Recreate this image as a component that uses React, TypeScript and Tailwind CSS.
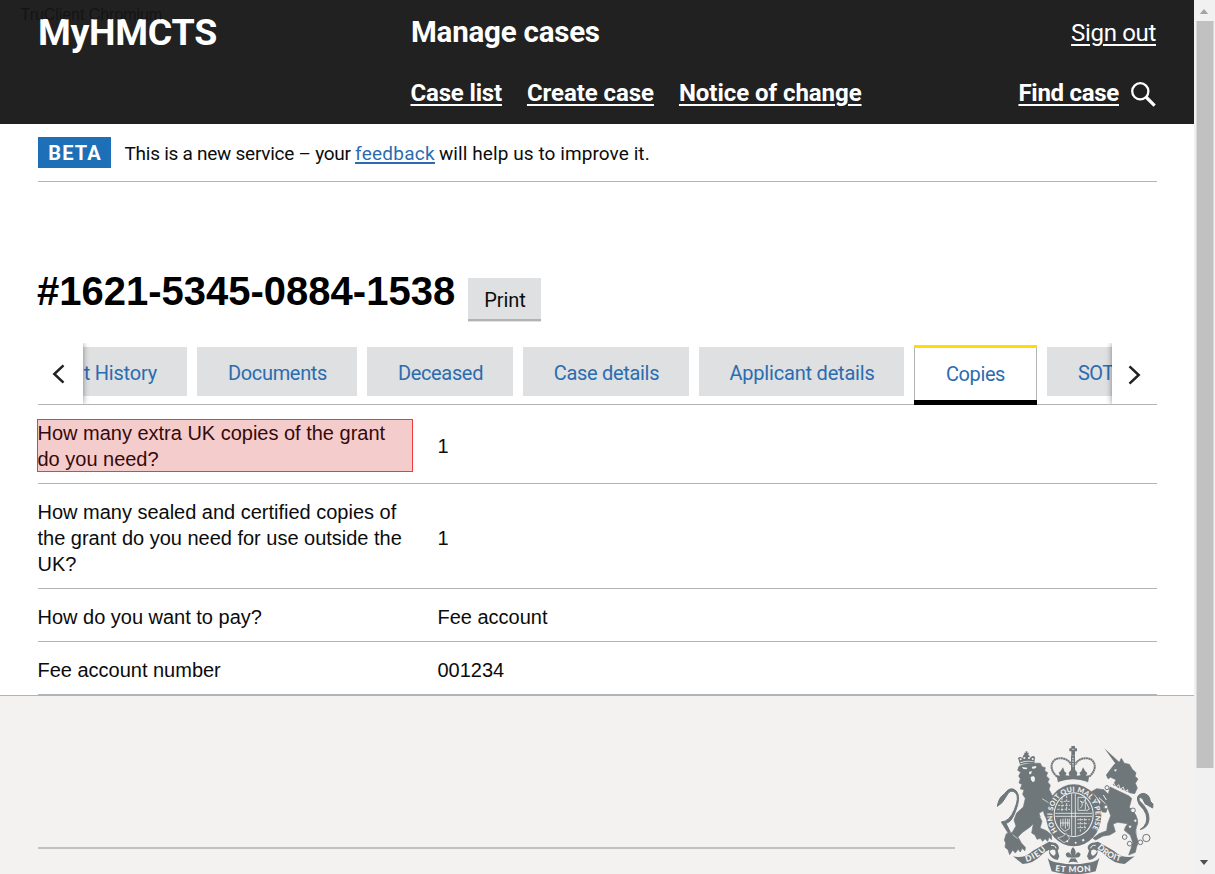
import type { ReactNode } from 'react';

const tabs = [
  { label: 'Documents', box: 'w-[160px]', track: 'tracking-[-0.32px]' },
  { label: 'Deceased', box: 'w-[146px]', track: 'tracking-[-0.34px]' },
  { label: 'Case details', box: 'w-[166px]', track: 'tracking-[-0.32px]' },
  { label: 'Applicant details', box: 'w-[205px]', track: 'tracking-[-0.2px]' },
];

function HeaderLink({ children, className }: { children: ReactNode; className: string }) {
  return (
    <a href="#" className={`block whitespace-nowrap text-[24px] leading-[30px] text-white underline decoration-2 underline-offset-[3px] ${className}`}>
      {children}
    </a>
  );
}

function Row({ question, answer, className, marked }: { question: string; answer: string; className: string; marked?: boolean }) {
  return (
    <div className={`flex items-center border-b border-[#b1b4b6] ${className}`}>
      <div className="relative -ml-[0.5px] w-[375px] shrink-0">
        {question}
        {marked && <div className="absolute -left-[0.5px] top-[-1px] h-[53px] w-[376px] border border-[#f33a3a] bg-[#cc0000]/20" />}
      </div>
      <div className="ml-[25px]">{answer}</div>
    </div>
  );
}

function Crest() {
  return (
    <svg viewBox="45 192 480 390" className="h-[130px] w-[160px] shrink-0" fill="#6f777b" stroke="none">
      {/* lion crown */}
      <path d="M120 254 L114 234 Q120 228 127 234 L130 226 Q138 214 147 226 L151 233 Q158 224 165 231 L163 252 Q141 245 120 254Z" />
      <path d="M137 214h5v12h-5z M133 218h13v4h-13z" />
      <g fill="#f3f2f1"><circle cx="122" cy="238" r="3" /><circle cx="133" cy="234" r="3.2" /><circle cx="147" cy="234" r="3.2" /><circle cx="158" cy="237" r="3" /><path d="M121 247 Q141 238 162 245 L162 247 Q141 241 121 250Z" /></g>
      {/* lion */}
      <path stroke="#6f777b" strokeWidth="2" d="M117 259 Q140 247 181 250 L186 260 L196 263 L194 272 L203 278 L199 288 L208 297 L203 306 L211 316 L207 328 L216 346 L225 352 L216 366 L224 380 L221 404 L213 394 L211 411 L203 402 L200 418 L193 404 L190 392 L177 400 L186 424 L180 444 L199 452 L214 464 L215 479 L207 472 L203 484 L195 476 L188 484 L181 475 L171 478 L165 465 L155 459 L160 431 L150 441 L126 458 L114 471 L124 489 L136 502 L135 512 L126 505 L121 516 L114 508 L106 519 L98 510 L89 524 L84 509 L75 502 L77 489 L73 480 L79 461 L96 458 L108 438 L102 420 L110 399 L130 381 L136 355 L128 343 L132 329 L121 327 L126 313 L117 309 L121 296 L116 288 L122 277 L113 271Z" />
      <path d="M126 261l16 2-2 5-10-1z M155 260l14-2-1 6-10 3z M147 275l9-1-3 8-5 1z M152 291l8-3 5 5-1 10-5 4-6-7z" fill="#f3f2f1" />
      <path d="M186 356l20 12 8 13M180 410l9 14M98 464l15 12" fill="none" stroke="#f3f2f1" strokeWidth="2" />
      <path stroke="#6f777b" strokeWidth="3" d="M86 461 Q79 450 64 426 Q89 424 103 389 Q119 351 107 339 Q91 323 77 352 Q68 370 52 379 Q56 352 73 342 Q91 316 109 333 Q124 351 106 395 Q94 428 78 430 L91 457Z" />
      {/* unicorn */}
      <path d="M373 205 L421 249 L410 256Z" />
      <path stroke="#6f777b" strokeWidth="2" d="M379 285 L390 270 L404 252 L418 247 L424 235 L433 250 L448 253 L457 268 L468 278 L465 289 L474 297 L466 310 L472 324 L464 341 L449 338 L400 315 L408 299 L392 292 L384 296Z" />
      <path d="M401 270l9-3-2 8z" fill="#f3f2f1" />
      <path stroke="#6f777b" strokeWidth="2" d="M390 321 L446 347 L455 355 L448 382 Q474 404 473 430 Q464 450 469 468 L475 486 L469 503 L466 517 L446 525 L453 506 L458 487 L451 466 L433 451 Q433 444 443 431 L413 427 L399 432 L406 455 L389 465 L369 468 L347 480 L339 475 L357 461 L380 452 L383 431 L392 407 L383 382 L378 397 L367 396 L357 377 L363 366 L345 344 L334 335 L350 326 L372 329 L385 343Z" />
      <path d="M393 317 L448 345 M400 307l8 15 8-8 5 14 9-7 4 14 9-6 1 14" fill="none" stroke="#f3f2f1" strokeWidth="2.6" />
      <path d="M357 353l19 18m-6-26 9 15m-1 14-6 10" fill="none" stroke="#f3f2f1" strokeWidth="3" />
      <path stroke="#6f777b" strokeWidth="3" d="M480 449 Q507 433 498 402 Q493 388 478 374 Q462 345 489 340 Q509 342 511 364 L519 372 L518 384 L495 371 L488 356 Q474 347 478 362 Q508 390 507 417 Q505 444 480 449Z" />
      {/* chain */}
      <g fill="#f3f2f1" stroke="#6f777b" strokeWidth="3"><circle cx="434" cy="471" r="7" /><circle cx="449" cy="491" r="7" /><circle cx="481" cy="487" r="7" /><circle cx="499" cy="474" r="11" /><circle cx="459" cy="391" r="7" /><circle cx="466" cy="422" r="5" /><circle cx="450" cy="440" r="5" /><circle cx="381" cy="323" r="6" /><circle cx="378" cy="381" r="6" /></g>
      {/* royal crown */}
      <path d="M274 198h11v7h6v9h-6v12h-11v-12h-6v-9h6z" />
      <path d="M276 208h7" stroke="#f3f2f1" strokeWidth="2" />
      <path d="M231 290 C200 262 218 231 245 235 Q267 238 273 254 M328 290 C359 262 341 231 314 235 Q292 238 286 254" fill="none" stroke="#6f777b" strokeWidth="6" strokeDasharray="6 1" />
      <path d="M273 226h12v52h-12z" />
      <path d="M279 233v38" stroke="#f3f2f1" strokeWidth="3" strokeDasharray="5 3" />
      <path d="M230 286 L240 287 L236 278 L242 273 L249 262 L254 275 L260 279 L256 286 L268 287 L266 278 L273 270 L279 259 L286 270 L292 278 L290 287 L302 286 L298 279 L304 274 L309 262 L316 274 L322 279 L318 287 L328 286 L324 308 Q279 293 234 308Z" />
      <path d="M235 308 Q279 292 323 308" fill="none" stroke="#f3f2f1" strokeWidth="5" />
      {/* garter and shield */}
      <ellipse cx="281" cy="406" rx="83" ry="93" />
      <ellipse cx="281" cy="404" rx="60" ry="67" fill="#f3f2f1" />
      <ellipse cx="281" cy="404" rx="57" ry="64" />
      <g fill="none" stroke="#f3f2f1" strokeWidth="2.4">
        <path d="M275 341v126M286 341v126M226 400h110M226 409h110" />
        <path d="M240 364h30M234 376h36M232 388h38M246 353v40M260 347v46" strokeDasharray="7 4" />
        <path d="M292 419h38M292 431h34M292 443h26M301 415v42M314 415v35" strokeDasharray="7 4" />
        <path d="M294 352h22v39h-22zM300 385q12-9 3-22m-3 0 10 5 6-10m2 8 10 21-10 6" />
        <path d="M242 418v24l12 12 14-8v-30M249 416v23m7-24v31m7-30v23M240 429h28" />
      </g>
      <path id="garter" d="M241 463 A65 72 0 1 1 327 459" fill="none" />
      <text fill="#f3f2f1" fontFamily="Lato, sans-serif" fontWeight="900" fontSize="21">
        <textPath href="#garter" startOffset="12" textLength="306" lengthAdjust="spacing">HONI SOIT QUI MAL Y PENSE</textPath>
      </text>
      <path d="M233 474q18-3 26-14l10 16q-10 10-17 12z" stroke="#f3f2f1" strokeWidth="2" />
      <g fill="#f3f2f1"><circle cx="262" cy="484" r="3" /><circle cx="287" cy="488" r="3" /><path d="m305 480 5-4 4 5-5 4z" /></g>
      {/* motto scroll */}
      <path d="M99 529 Q130 538 159 512 L207 485 L227 489 Q243 499 233 512 L238 529 L233 540 Q213 537 207 519 L208 509 Q198 512 187 523 Q160 552 128 552Z" />
      <path d="M464 529 Q430 538 401 512 L354 485 L334 489 Q316 499 327 512 L321 529 L327 540 Q347 537 353 519 L352 509 Q362 512 373 523 Q401 552 434 552Z" />
      <path d="M209 514q6-8 16-4 5 12-3 17 -9-1-13-13zM351 514q-6-8-16-4-5 12 3 17 9-1 13-13z" fill="#f3f2f1" />
      <path d="M213 496q14-1 15 9M347 496q-14-1-15 9" fill="none" stroke="#f3f2f1" strokeWidth="3" />
      <path d="M203 534 Q214 547 237 548 Q280 557 323 548 Q346 547 358 534 L347 574 Q280 592 215 574Z" />
      <path d="M279 501 Q293 514 282 530 Q294 507 302 523 Q298 536 286 533 L294 548 Q279 542 265 548 L273 533 Q260 536 257 523 Q265 507 277 530 Q266 514 279 501Z" />
      <path d="M263 534h32" stroke="#f3f2f1" strokeWidth="2" />
      <path id="dieu" d="M139 545 Q169 540 204 505" fill="none" />
      <path id="droit" d="M351 503 Q385 540 429 546" fill="none" />
      <path id="mon" d="M225 573 Q280 581 336 573" fill="none" />
      <g fill="#f3f2f1" fontFamily="Lato, sans-serif" fontWeight="900" fontSize="25">
        <text><textPath href="#dieu" textLength="70">DIEU</textPath></text>
        <text><textPath href="#droit" textLength="82">DROIT</textPath></text>
        <text><textPath href="#mon" textLength="108">ET MON</textPath></text>
      </g>
    </svg>
  );
}

export default function App() {
  return (
    <div className="flex h-[874px] w-[1215px] overflow-hidden bg-white font-['Roboto',sans-serif] text-[#0b0c0c]">
      <div className="relative flex w-[1194px] flex-col overflow-hidden">
        <header className="h-[124px] shrink-0 bg-[#212121] pl-[38px] pr-[38px] text-white">
          <div className="flex h-[64px] items-center">
            <div className="w-[373px] whitespace-nowrap text-[37.5px] font-bold leading-[44px] tracking-[-0.3px]">MyHMCTS</div>
            <div className="flex-1 text-[29.5px] font-bold leading-[36px] tracking-[-0.22px]">Manage cases</div>
            <HeaderLink className="pt-px tracking-[-0.33px]">Sign out</HeaderLink>
          </div>
          <nav className="flex h-[60px] items-start pl-[372.5px] pt-[14px] font-bold">
            <HeaderLink className="mr-[25px] tracking-[-0.17px]">Case list</HeaderLink>
            <HeaderLink className="mr-[25px] tracking-[-0.07px]">Create case</HeaderLink>
            <HeaderLink className="tracking-[-0.05px]">Notice of change</HeaderLink>
            <HeaderLink className="ml-auto mr-[12px] tracking-[-0.28px]">Find case</HeaderLink>
            <svg viewBox="0 0 25 25" className="mt-[4px] h-[25px] w-[25px]" fill="none" stroke="#fff">
              <circle cx="9.3" cy="9.3" r="8.1" strokeWidth="2.3" />
              <path d="m15 15 8.6 8.6" strokeWidth="3.2" />
            </svg>
          </nav>
        </header>

        <div className="mx-[38px] mr-[37px] flex h-[58px] shrink-0 items-start border-b border-[#b1b4b6] pt-[13px]">
          <strong className="mr-[13.5px] flex h-[31px] w-[73px] items-center justify-center bg-[#1d70b8] pl-px pt-px text-[20px] leading-none tracking-[1.1px] text-white">BETA</strong>
          <p className="flex whitespace-nowrap pt-[4px] text-[19px] leading-[25px]">
            <span className="w-[230.5px] tracking-[-0.26px]">This is a new service – your</span>
            <a href="#" className="w-[84px] tracking-[0.27px] text-[#2b6cb0] underline decoration-[1.5px] underline-offset-[2px]">feedback</a>
            <span className="tracking-[0.08px]">will help us to improve it.</span>
          </p>
        </div>

        <div className="flex h-[161px] shrink-0 items-start pl-[37px] pt-[96px]">
          <h1 className="w-[431px] font-['Liberation_Sans',sans-serif] text-[40px] font-bold leading-[27px] text-black">#1621-5345-0884-1538</h1>
          <button className="h-[44px] w-[73px] border-b border-[#dee0e2] bg-[#dee0e2] pl-px pt-px text-[20px] leading-[24px] tracking-[-0.1px] shadow-[inset_0_-2px_0_#b1b4b6]">Print</button>
        </div>

        <div className="ml-[38px] mr-[37px] flex h-[62px] shrink-0 border-b border-[#b1b4b6] text-[20px] text-[#2b6cb0]">
          <div className="relative z-10 flex h-[61px] w-[45px] shrink-0 items-center bg-white pl-[14px] pt-px shadow-[0_0_6px_rgba(0,0,0,0.45)] [clip-path:inset(0_-8px_0_0)]">
            <svg viewBox="0 0 13 20" className="h-[20px] w-[13px]" fill="none" stroke="#212121" strokeWidth="2.5"><path d="M11.5 1.3 2.3 10l9.2 8.7" /></svg>
          </div>
          <div className="flex h-[62px] w-[1029px] shrink-0 gap-[10px] overflow-hidden whitespace-nowrap pt-[2px]">
            <div className="mt-[2px] flex h-[49px] w-[104px] shrink-0 items-center justify-end bg-[#dee0e2] pr-[30px] pt-[2px] tracking-[-0.2px]">Event History</div>
            {tabs.map((t) => (
              <div key={t.label} className={`mt-[2px] flex h-[49px] shrink-0 items-center justify-center bg-[#dee0e2] pl-px pt-[2px] ${t.box} ${t.track}`}>{t.label}</div>
            ))}
            <div className="flex h-[60px] w-[123px] shrink-0 flex-col border-x border-[#b1b4b6] bg-white">
              <div className="-mx-px h-[3px] bg-[#ffdd00]" />
              <div className="flex flex-1 items-center justify-center tracking-[-0.4px]">Copies</div>
              <div className="-mx-px h-[5px] bg-black" />
            </div>
            <div className="mt-[2px] flex h-[49px] w-[104px] shrink-0 items-center bg-[#dee0e2] pl-[31px] pt-[2px] tracking-[-0.6px]">SOT</div>
          </div>
          <div className="relative z-10 flex h-[61px] w-[45px] shrink-0 items-center bg-white pl-[16px] pt-[2px] shadow-[0_0_6px_rgba(0,0,0,0.45)] [clip-path:inset(0_0_0_-8px)]">
            <svg viewBox="0 0 13 20" className="h-[20px] w-[13px]" fill="none" stroke="#212121" strokeWidth="2.5"><path d="m1.5 1.3 9.2 8.7-9.2 8.7" /></svg>
          </div>
        </div>

        <div className="ml-[38px] mr-[37px] flex h-[290px] shrink-0 flex-col font-['Liberation_Sans',sans-serif] text-[20px] leading-[26px] tracking-[-0.01px]">
          <Row className="h-[79px] pt-[4px]" question="How many extra UK copies of the grant do you need?" answer="1" marked />
          <Row className="h-[105px] pt-[4px]" question="How many sealed and certified copies of the grant do you need for use outside the UK?" answer="1" />
          <Row className="h-[53px] pt-[4px]" question="How do you want to pay?" answer="Fee account" />
          <Row className="h-[53px] pt-[4px]" question="Fee account number" answer="001234" />
        </div>

        <footer className="flex flex-1 items-start border-t border-[#b1b4b6] bg-[#f3f2f1] pl-[38px]">
          <div className="mr-[40px] mt-[151px] h-[2px] w-[917px] bg-[#bfc1c3]" />
          <div className="mt-[48px]"><Crest /></div>
        </footer>

        <div className="absolute left-[20.5px] top-[6px] font-['Liberation_Sans',sans-serif] text-[16px] leading-[18px] tracking-[-0.05px] text-black/40">TruClient Chromium</div>
      </div>

      <div className="flex w-[21px] flex-col items-center bg-[#f1f1f1]">
        <div className="flex h-[21px] items-center pr-px"><svg viewBox="0 0 10 6" className="mt-[2px] h-[5px] w-[10px]"><path d="M5 0 10 6H0z" fill="#a3a3a3" /></svg></div>
        <div className="mr-[1px] h-[747px] w-[17px] translate-x-[0.5px] bg-[#c1c1c1]" />
        <div className="mt-auto flex h-[24px] items-center pr-px"><svg viewBox="0 0 10 6" className="h-[5px] w-[10px]"><path d="M0 0h10L5 6z" fill="#505050" /></svg></div>
      </div>
    </div>
  );
}
